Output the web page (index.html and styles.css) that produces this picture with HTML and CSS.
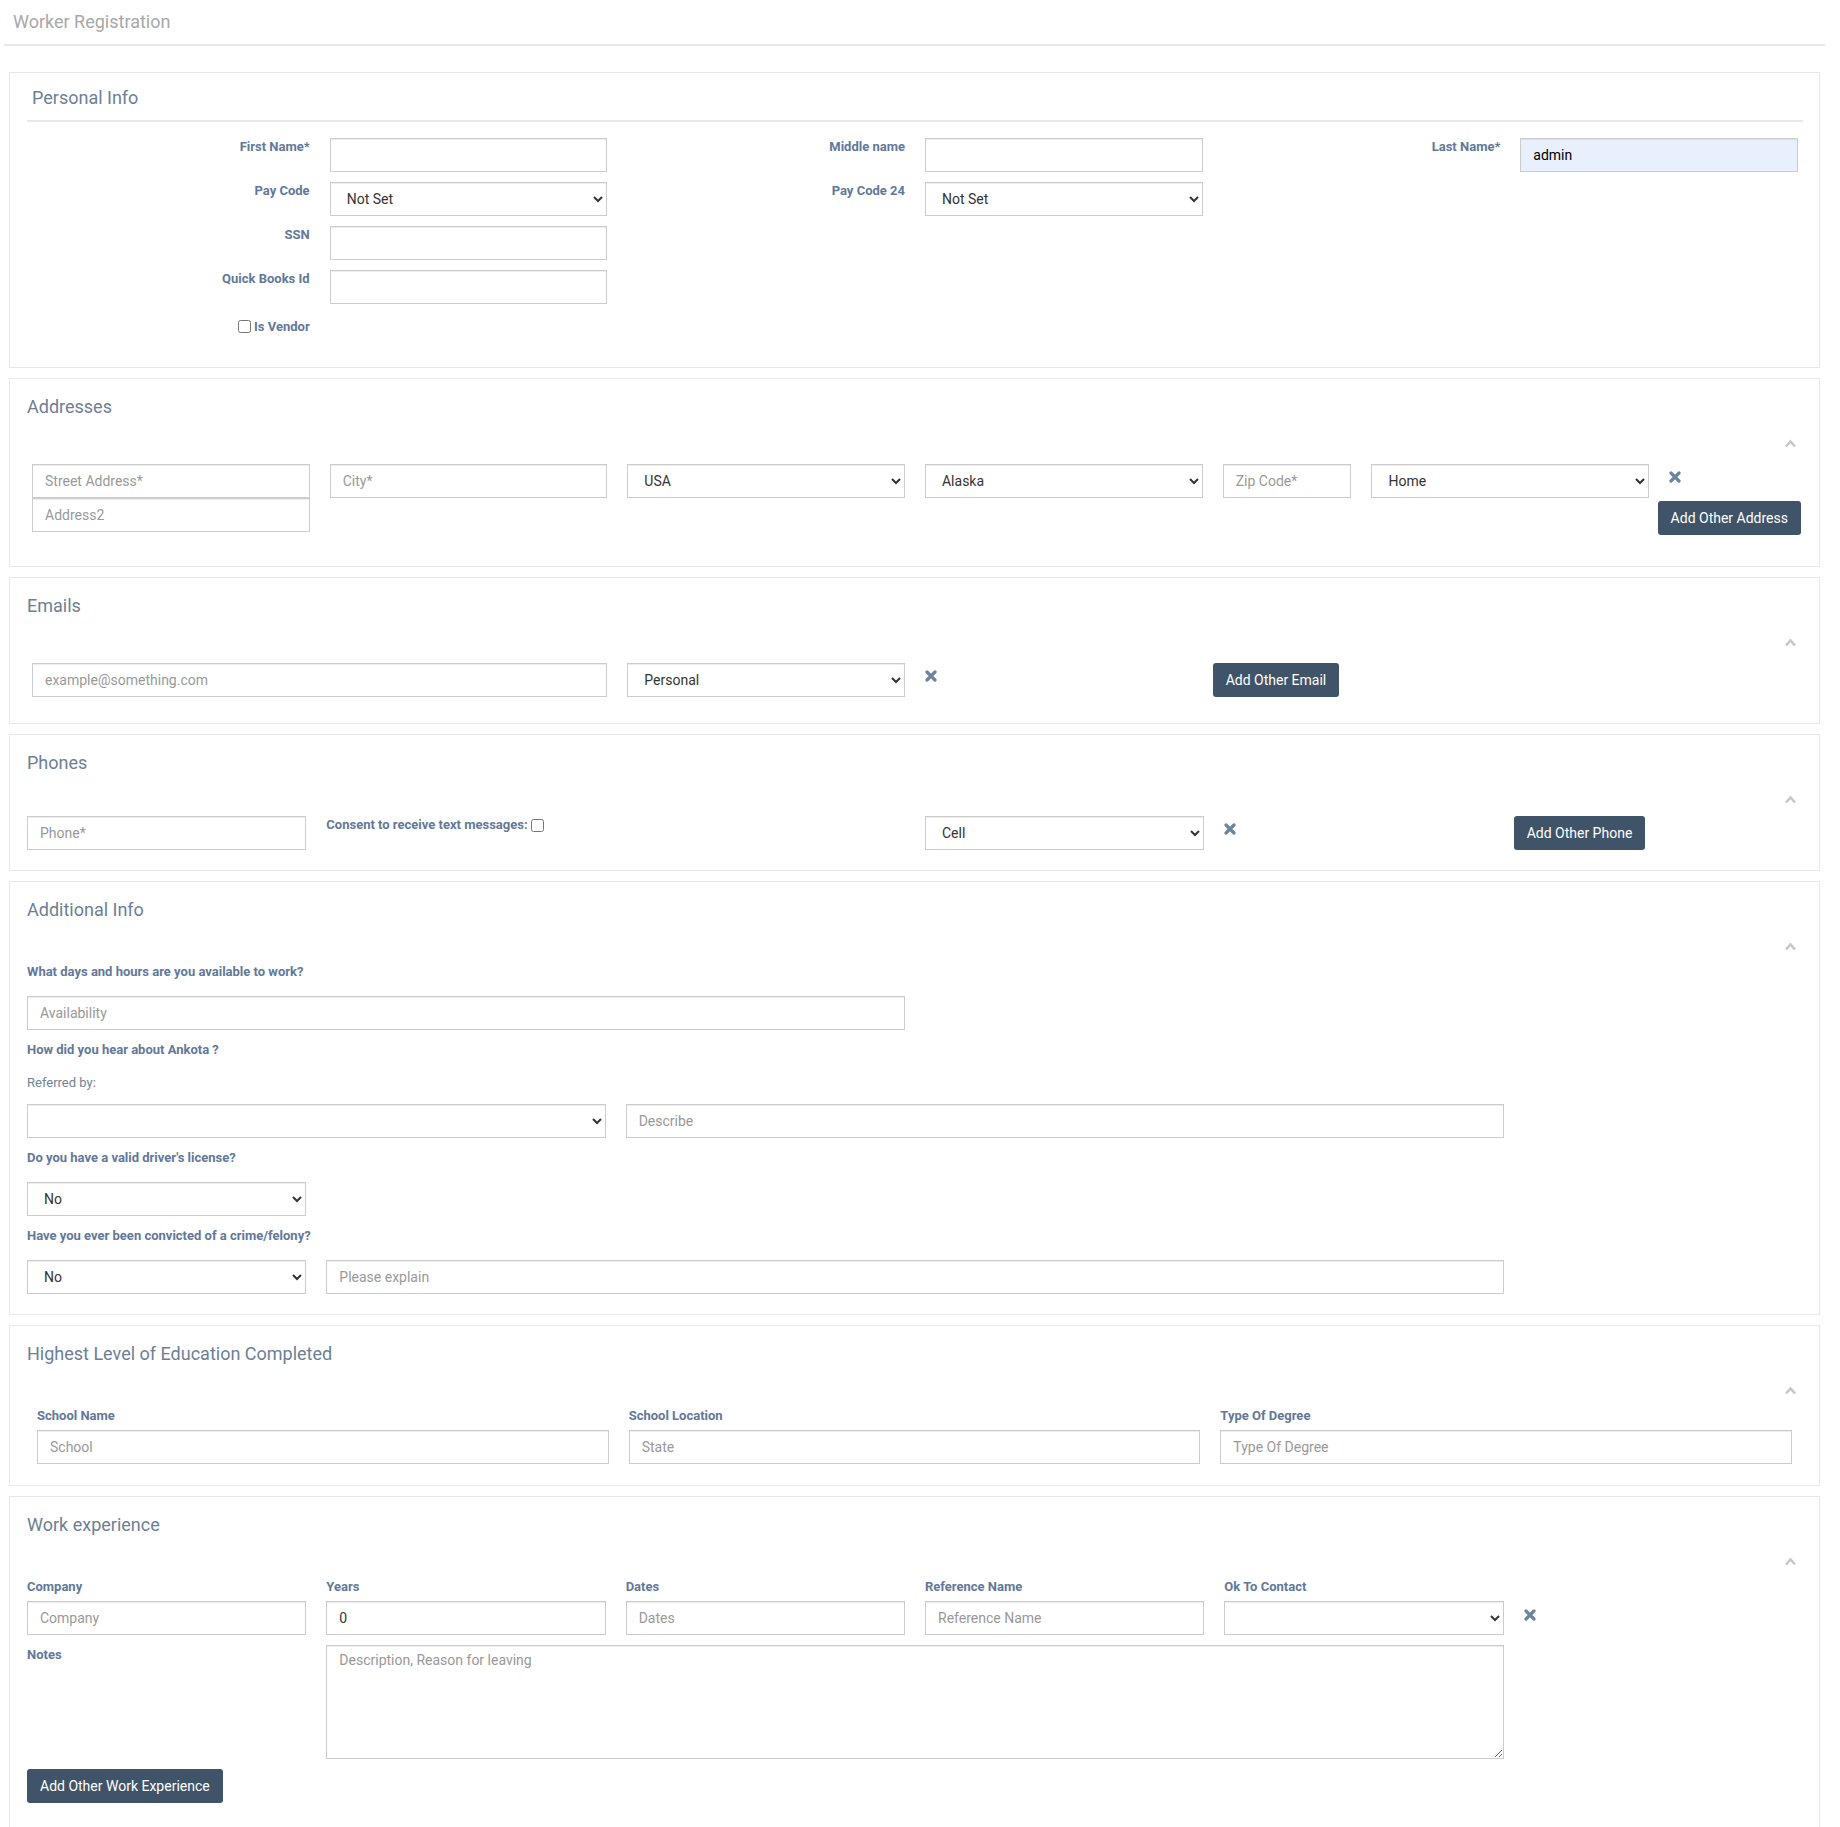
FILE: index.html
```html
<!DOCTYPE html>
<html lang="en">
<head>
    <meta charset="UTF-8">
    <title>Worker Registration</title>
    <link rel="stylesheet" href="styles.css">
</head>
<body>
<div class="page">
    <div class="page-head">Worker Registration</div>

    <!-- personal info -->
    <div class="panel panel-first">
        <h2 class="panel-title indent">Personal Info</h2>
        <hr class="title-rule">
        <div class="grid inset personal">
            <label class="lbl s2 first">First Name*</label>
            <input class="fc s2" type="text">
            <label class="lbl s2">Middle name</label>
            <input class="fc s2" type="text">
            <label class="lbl s2">Last Name*</label>
            <input class="fc s2 autofill" type="text" value="admin">

            <label class="lbl s2 first">Pay Code</label>
            <select class="fc s2"><option>Not Set</option></select>
            <label class="lbl s2">Pay Code 24</label>
            <select class="fc s2"><option>Not Set</option></select>

            <label class="lbl s2 first">SSN</label>
            <input class="fc s2" type="text">

            <label class="lbl s2 first">Quick Books Id</label>
            <input class="fc s2" type="text">

            <label class="lbl s2 first vendor"><input type="checkbox" class="chk">Is Vendor</label>
        </div>
    </div>

    <!-- addresses -->
    <div class="panel">
        <h2 class="panel-title">Addresses</h2>
        <div class="tools"><svg class="chev" viewBox="0 0 13 9"><path d="M2 7.5L6.5 2.5L11 7.5"/></svg></div>
        <div class="grid inset body-wide pad-addr">
            <div class="s2 stack">
                <input class="fc" type="text" placeholder="Street Address*">
                <input class="fc" type="text" placeholder="Address2">
            </div>
            <input class="fc s2" type="text" placeholder="City*">
            <select class="fc s2"><option>USA</option></select>
            <select class="fc s2"><option>Alaska</option></select>
            <input class="fc s1" type="text" placeholder="Zip Code*">
            <select class="fc s2"><option>Home</option></select>
            <div class="s1 addr-tools">
                <svg class="ico-x" viewBox="0 0 12 12"><path d="M2 2L10 10M10 2L2 10"/></svg>
                <button class="btn addr-btn">Add Other Address</button>
            </div>
        </div>
    </div>

    <!-- emails -->
    <div class="panel">
        <h2 class="panel-title">Emails</h2>
        <div class="tools"><svg class="chev" viewBox="0 0 13 9"><path d="M2 7.5L6.5 2.5L11 7.5"/></svg></div>
        <div class="grid inset body-wide pad-email">
            <input class="fc s4" type="text" placeholder="example@something.com">
            <select class="fc s2"><option>Personal</option></select>
            <div class="s1 x-cell"><svg class="ico-x" viewBox="0 0 12 12"><path d="M2 2L10 10M10 2L2 10"/></svg></div>
            <div class="from9 btn-cell"><button class="btn">Add Other Email</button></div>
        </div>
    </div>

    <!-- phones -->
    <div class="panel">
        <h2 class="panel-title">Phones</h2>
        <div class="tools"><svg class="chev" viewBox="0 0 13 9"><path d="M2 7.5L6.5 2.5L11 7.5"/></svg></div>
        <div class="grid body pad-1">
            <input class="fc s2" type="text" placeholder="Phone*">
            <label class="lbl-left s4">Consent to receive text messages:<input type="checkbox" class="chk chk-after"></label>
            <select class="fc s2"><option>Cell</option></select>
            <div class="s1 x-cell"><svg class="ico-x" viewBox="0 0 12 12"><path d="M2 2L10 10M10 2L2 10"/></svg></div>
            <div class="from11 btn-cell"><button class="btn">Add Other Phone</button></div>
        </div>
    </div>

    <!-- additional info -->
    <div class="panel">
        <h2 class="panel-title">Additional Info</h2>
        <div class="tools"><svg class="chev" viewBox="0 0 13 9"><path d="M2 7.5L6.5 2.5L11 7.5"/></svg></div>
        <div class="grid body pad-1">
            <label class="q s12 first">What days and hours are you available to work?</label>
            <input class="fc s6 first gap-15" type="text" placeholder="Availability">

            <label class="q s12 first gap-11">How did you hear about Ankota ?</label>
            <label class="ref s12 first gap-15">Referred by:</label>
            <select class="fc s4 first gap-12"><option></option></select>
            <input class="fc s6 gap-12" type="text" placeholder="Describe">

            <label class="q s12 first gap-11">Do you have a valid driver's license?</label>
            <select class="fc s2 first gap-15"><option>No</option></select>

            <label class="q s12 first gap-11">Have you ever been convicted of a crime/felony?</label>
            <select class="fc s2 first gap-15"><option>No</option></select>
            <input class="fc s8 gap-15" type="text" placeholder="Please explain">
        </div>
    </div>

    <!-- education -->
    <div class="panel">
        <h2 class="panel-title">Highest Level of Education Completed</h2>
        <div class="tools"><svg class="chev" viewBox="0 0 13 9"><path d="M2 7.5L6.5 2.5L11 7.5"/></svg></div>
        <div class="grid3 body">
            <div>
                <label class="fl">School Name</label>
                <input class="fc" type="text" placeholder="School">
            </div>
            <div>
                <label class="fl">School Location</label>
                <input class="fc" type="text" placeholder="State">
            </div>
            <div>
                <label class="fl">Type Of Degree</label>
                <input class="fc" type="text" placeholder="Type Of Degree">
            </div>
        </div>
    </div>

    <!-- work experience -->
    <div class="panel">
        <h2 class="panel-title">Work experience</h2>
        <div class="tools"><svg class="chev" viewBox="0 0 13 9"><path d="M2 7.5L6.5 2.5L11 7.5"/></svg></div>
        <div class="grid body work">
            <div class="s2">
                <label class="fl">Company</label>
                <input class="fc" type="text" placeholder="Company">
            </div>
            <div class="s2">
                <label class="fl">Years</label>
                <input class="fc" type="text" value="0">
            </div>
            <div class="s2">
                <label class="fl">Dates</label>
                <input class="fc" type="text" placeholder="Dates">
            </div>
            <div class="s2">
                <label class="fl">Reference Name</label>
                <input class="fc" type="text" placeholder="Reference Name">
            </div>
            <div class="s2">
                <label class="fl">Ok To Contact</label>
                <select class="fc"><option></option></select>
            </div>
            <div class="s1 x-cell x-low"><svg class="ico-x" viewBox="0 0 12 12"><path d="M2 2L10 10M10 2L2 10"/></svg></div>

            <label class="fl s2 first notes-lbl">Notes</label>
            <textarea class="fc s8 notes" placeholder="Description, Reason for leaving"></textarea>

            <div class="s12 first gap-10"><button class="btn">Add Other Work Experience</button></div>
        </div>
    </div>
</div>
</body>
</html>
```

FILE: styles.css
```css
body {
    margin: 0;
    font-family: Roboto, "Liberation Sans", Arial, sans-serif;
    color: #333;
    background: #fff;
}
.page {
    width: 1825px;
    box-sizing: border-box;
    padding: 0 4px;
}
.page-head {
    padding: 11px 9px 12px;
    margin-right: -4px;
    font-size: 18px;
    line-height: 21px;
    color: #a8a8a8;
    border-bottom: 2px solid #e6e9ec;
}
.panel {
    margin: 0 1px 10px 5px;
    border: 1px solid #e7e8ea;
    padding: 17px 16px 19px 17px;
}
.panel-first {
    margin-top: 26px;
    padding-top: 14px;
}
.panel-title {
    margin: 0;
    font-size: 18px;
    line-height: 21px;
    font-weight: 400;
    color: #6c7f96;
}
.indent {
    padding-left: 5px;
}
.title-rule {
    margin: 12px 0 0;
    border: 0;
    border-top: 2px solid #e6e9ec;
}
.tools {
    margin-top: 17px;
    height: 20px;
    box-sizing: border-box;
    padding: 5px 6px 0 0;
    text-align: right;
    line-height: 0;
}
.chev {
    width: 13px;
    height: 9px;
}
.chev path {
    fill: none;
    stroke: #c4c8cd;
    stroke-width: 2.6;
}
.ico-x {
    display: block;
    width: 12px;
    height: 12px;
}
.ico-x path {
    stroke: #6d84a0;
    stroke-width: 3.2;
    stroke-linecap: round;
}

/* grids */
.grid {
    display: grid;
    grid-template-columns: repeat(12, minmax(0, 1fr));
    column-gap: 20px;
}
.grid3 {
    display: grid;
    grid-template-columns: repeat(3, minmax(0, 1fr));
    column-gap: 20px;
    padding: 0 11px 2px 10px;
}
.inset {
    padding-left: 5px;
    padding-right: 5px;
}
.s1 { grid-column-end: span 1; }
.s2 { grid-column-end: span 2; }
.s4 { grid-column-end: span 4; }
.s6 { grid-column-end: span 6; }
.s8 { grid-column-end: span 8; }
.s12 { grid-column-end: span 12; }
.first { grid-column-start: 1; }
.from9 { grid-column: 9 / span 2; }
.from11 { grid-column: 11 / span 2; }

.body { margin-top: 6px; }
.body-wide { margin-top: 10px; }
.pad-addr { padding-bottom: 12px; }
.pad-email { padding-bottom: 7px; }
.pad-1 { padding-bottom: 1px; }

.personal {
    margin-top: 16px;
    grid-auto-rows: 34px;
    row-gap: 10px;
}

/* form controls */
.fc {
    display: block;
    width: 100%;
    height: 34px;
    box-sizing: border-box;
    padding: 6px 12px;
    border: 1px solid #ccc;
    border-radius: 0;
    box-shadow: inset 0 1px 1px rgba(0, 0, 0, .075);
    background-color: #fff;
    font-family: inherit;
    font-size: 14px;
    color: #333;
}
.fc::placeholder {
    color: #999;
}
.autofill {
    background-color: #e8f0fe;
    color: #000;
}
textarea.fc.notes {
    height: 114px;
    grid-column: 3 / span 8;
    margin-top: 10px;
    resize: vertical;
}

/* labels */
.lbl {
    font-size: 13px;
    line-height: 18px;
    font-weight: 700;
    color: #62789a;
    text-align: right;
}
.vendor {
    padding-top: 4px;
}
.chk {
    width: 13px;
    height: 13px;
    margin: 0 3px 0 0;
    vertical-align: -2px;
}
.chk-after {
    margin: 0 0 0 3px;
    vertical-align: -3px;
}
.lbl-left,
.q,
.fl {
    display: block;
    font-size: 13px;
    line-height: 18px;
    font-weight: 700;
    color: #62789a;
}
.fl {
    margin-bottom: 5px;
}
.ref {
    font-size: 13px;
    line-height: 18px;
    color: #71829a;
}
.gap-10 { margin-top: 10px; }
.gap-11 { margin-top: 11px; }
.gap-12 { margin-top: 12px; }
.gap-15 { margin-top: 15px; }
.notes-lbl {
    margin: 11px 0 0;
}

/* icons + buttons */
.x-cell {
    padding-top: 7px;
}
.x-low {
    padding-top: 31px;
}
.addr-tools {
    display: flex;
    flex-direction: column;
    align-items: flex-start;
    padding-top: 7px;
}
.addr-btn {
    align-self: flex-end;
    margin: 18px -3px 0 0;
    white-space: nowrap;
}
.btn-cell {
    margin-left: -10px;
}
.btn {
    height: 34px;
    padding: 0 13px;
    border: 0;
    border-radius: 3px;
    background: #3f5469;
    color: #fff;
    font-family: inherit;
    font-size: 14px;
    white-space: nowrap;
    cursor: pointer;
}
.btn:hover {
    background: #34475a;
}
.work {
    padding-bottom: 30px;
}
```
